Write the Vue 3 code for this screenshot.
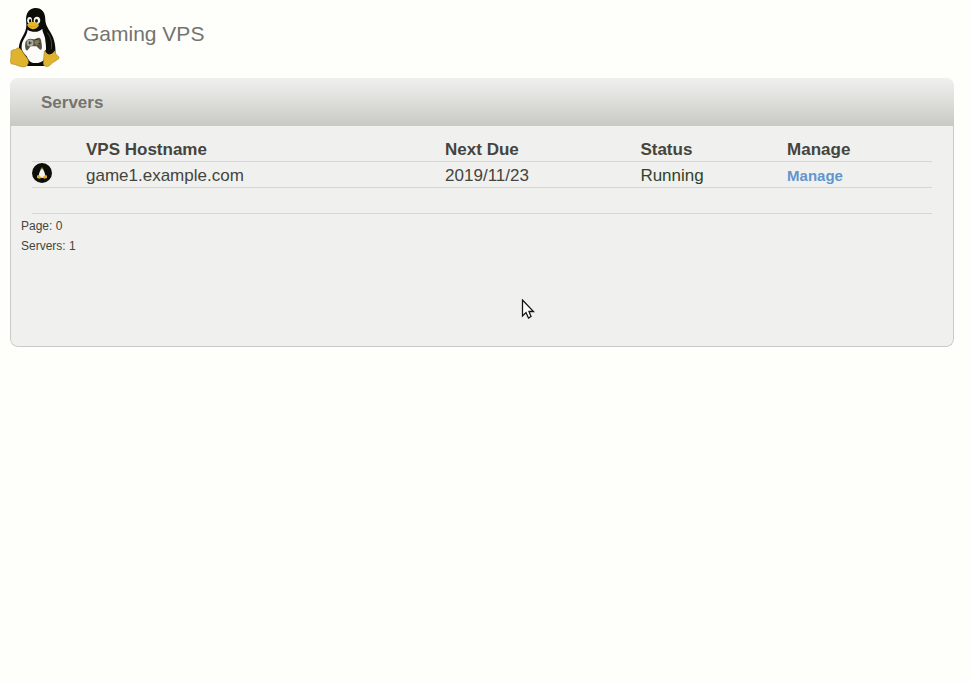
<template>
  <div class="page">
    <header class="page-header">
      <svg class="logo" viewBox="0 0 52 62" aria-hidden="true">
        <path
          d="M16.500 14C15.500 5 20 0 26 0C33 0 36 5 36 12C36 18 40 22 43 28C46 34 47 42 46 50C43 57 38 57 34 59H18C12 54 8 48 9 42C9 35 12 31 14.500 26C16.500 22 17 19 16.500 14Z"
          fill="#0b0c08" />
        <path
          d="M18 22C22 25 30 25 33 21C33 25 36 28 36 33C37 38 37 45 36 50C34 55 30 56 25 56C21 56 19 53 17 49C14 46 11 43 12 38C12 33 17 29 18 22Z"
          fill="#fbfbf7" />
        <path d="M38 25C42 30 43 35 42 43" fill="none" stroke="#4d4e46" stroke-width="1" />
        <ellipse cx="20" cy="12.500" rx="2.500" ry="3.500" fill="#f4f4ef" />
        <ellipse cx="27.500" cy="12.500" rx="3.300" ry="3.700" fill="#f4f4ef" />
        <ellipse cx="20.500" cy="13" rx="1.200" ry="1.900" fill="#11120d" />
        <ellipse cx="27" cy="13" rx="1.500" ry="2" fill="#11120d" />
        <path d="M17.500 17C19 15 22 13.500 24 14C26 14.500 28 16 29.500 17C29.500 19 26 22 23 21.500C20 21 18 19 17.500 17Z" fill="#e8b820" />
        <path d="M18.500 18C22 19.500 25 19.500 29 17.500" fill="none" stroke="#c4921a" stroke-width="0.600" />
        <path d="M18 32C21 30 24 33 27 31C30 29 32 31 32 35C33 39 33 44 30 42L27 39H21L18 43C15 44 15 37 16 34Z" fill="#55544a" />
        <circle cx="20.500" cy="35.500" r="3.500" fill="#a6a69d" />
        <circle cx="27.500" cy="35" r="2.500" fill="#8a7954" />
        <path d="M26 32H28M29 36H31M20 34V37M19 35.500H22" stroke="#29291f" stroke-width="1" />
        <path
          d="M1 44C2 42 6 43 7 41C9 40 12 42 13 45L18 52C20 55 18 60 14 60C9 60 6 57 2 57C-1 56 1 52 1 49Z"
          fill="#dfb32d" stroke="#a8821c" stroke-width="0.600" />
        <path
          d="M35 44C37 42 37 47 40 47C42 47 44 43 46 44C46 47 48 48 50 50C51 52 45 54 42 57C39 61 34 60 34 56Z"
          fill="#dfb32d" stroke="#a8821c" stroke-width="0.600" />
        <path d="M36 43C38 41 43 41 45 43C45 46 42 47 39.500 47C37 46 36 45 36 43Z" fill="#11120d" />
      </svg>
      <h1>Gaming VPS</h1>
    </header>

    <main class="panel">
      <h2>Servers</h2>
      <div class="panel-body">
        <table class="servers">
          <colgroup>
            <col class="col-icon">
            <col class="col-host">
            <col class="col-due">
            <col class="col-status">
            <col>
          </colgroup>
          <thead>
            <tr>
              <th></th>
              <th scope="col">VPS Hostname</th>
              <th scope="col">Next Due</th>
              <th scope="col">Status</th>
              <th scope="col">Manage</th>
            </tr>
          </thead>
          <tbody>
            <tr v-for="server in servers" :key="server.hostname">
              <td class="icon-cell">
                <svg class="os-icon" viewBox="0 0 20 20" aria-hidden="true">
                  <circle cx="10" cy="10" r="10" fill="#0c0e09" />
                  <path d="M8.500 6C8.500 3 11.500 3 11.500 6C12 9 14 10 13.500 14H6.500C6 10 8 9 8.500 6Z" fill="#30312a" />
                  <path d="M9 6H11C11.500 8 13.500 10 13 13C12.500 15.500 7.500 15.500 7 13C6.500 10 8.500 8 9 6Z" fill="#f5f5ee" />
                  <path d="M8.800 5.500H11.200L10 7.500Z" fill="#e0ad25" />
                  <path d="M5 12.500L7 12L9.500 14.500L8 15.800L5 15ZM15 12.500L13 12L10.500 14.500L12 15.800L15 15Z" fill="#e0ad25" />
                </svg>
              </td>
              <td>{{ server.hostname }}</td>
              <td>{{ server.nextDue }}</td>
              <td class="running">{{ server.status }}</td>
              <td><a href="#">Manage</a></td>
            </tr>
            <tr>
              <td colspan="5"></td>
            </tr>
          </tbody>
        </table>
        <div class="summary">
          <div>Page: {{ page }}</div>
          <div>Servers: {{ servers.length }}</div>
        </div>
      </div>
    </main>

    <svg class="pointer" viewBox="0 0 14 21" aria-hidden="true">
      <path d="M1.500 1V17L5 13.500L7.500 19L10 17.500L8 12.500H12.500Z" fill="#fff" stroke="#161713" stroke-width="1.300" />
    </svg>
  </div>
</template>

<script setup>
import { ref } from 'vue'

const page = ref(0)
const servers = ref([
  { hostname: 'game1.example.com', nextDue: '2019/11/23', status: 'Running' },
])
</script>

<style>
body {
  margin: 0;
  background: #fefffb;
}
</style>

<style scoped>
.page {
  position: relative;
  padding: 8px 18px 20px 10px;
  font-family: "Liberation Sans", Arial, sans-serif;
  color: #45443d;
}

.page-header {
  display: flex;
  align-items: flex-start;
  gap: 22px;
  height: 70px;
}

.logo {
  width: 51px;
  height: 61px;
}

h1 {
  margin: 0;
  font-size: 21px;
  line-height: 52px;
  font-weight: normal;
  color: #74746f;
}

.panel {
  border-radius: 8px;
  overflow: hidden;
  background: #f0f1ee;
}

h2 {
  margin: 0;
  padding: 1px 31px 0;
  font-size: 17px;
  line-height: 47px;
  color: #74746e;
  background: linear-gradient(#f0f1ee, #dddeda 50%, #c8c9c5);
}

.panel-body {
  padding: 10px 10px 90px;
  border: 1px solid #c9cac6;
  border-top: 0;
  border-radius: 0 0 8px 8px;
}

.servers {
  width: calc(100% - 22px);
  margin: 0 11px;
  table-layout: fixed;
  border-collapse: separate;
  border-spacing: 0;
  font-size: 17px;
  line-height: 23px;
}

.col-icon {
  width: 6%;
}

.col-host {
  width: 39.9%;
}

.col-due {
  width: 21.7%;
}

.col-status {
  width: 16.3%;
}

.servers th,
.servers td {
  height: 23px;
  padding: 2px 0 0;
  text-align: left;
  border-bottom: 1px solid #d6d7d3;
}

.servers .icon-cell {
  padding-top: 1px;
  vertical-align: top;
}

.os-icon {
  display: block;
  width: 20px;
  height: 20px;
}

.servers .running {
  color: #30432a;
}

.servers a {
  display: block;
  font-size: 15px;
  font-weight: bold;
  color: #6295cf;
  text-decoration: none;
}

.summary {
  padding-top: 2px;
  font-size: 12px;
  line-height: 20px;
}

.pointer {
  position: absolute;
  left: 521px;
  top: 299px;
  width: 14px;
  height: 21px;
}
</style>
